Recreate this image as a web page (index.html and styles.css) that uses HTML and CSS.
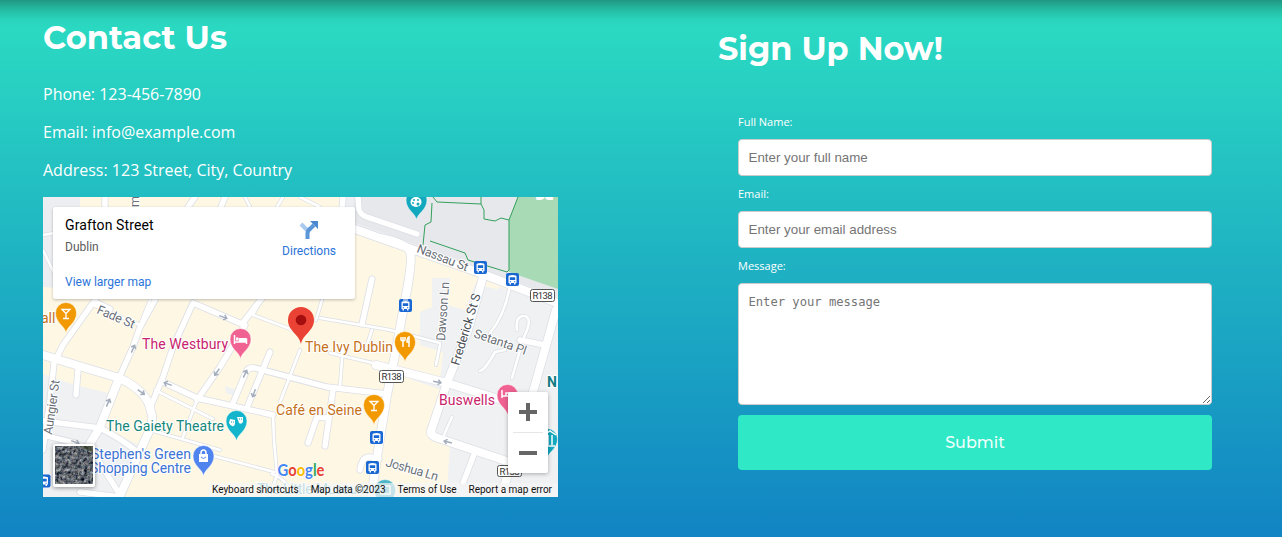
FILE: index.html
```html
<!DOCTYPE html>
<html lang="en">
<head>
<meta charset="utf-8">
<title>Contact Us</title>
<link rel="stylesheet" href="styles.css">
</head>
<body>
<main class="page">
  <section class="contact">
    <h2 class="title"><svg class="title-svg" width="200" height="44"><text x="0" y="31" textLength="184" lengthAdjust="spacingAndGlyphs">Contact Us</text></svg></h2>
    <p>Phone: 123-456-7890</p>
    <p>Email: info@example.com</p>
    <p class="last">Address: 123 Street, City, Country</p>
    <div class="map">
      <svg class="map-canvas" viewBox="43 197 515 300" width="515" height="300">
        <defs>
          <g id="thin">
            <path d="M93 305L140 325M253 315L293 330M320 318L390 330L440 343M330 353L390 367M300 350L280 402M343 345L340 387M210 455L274 472M150 430L220 450M197 400L183 437M273 415L274 440L277 475L270 495M155 390L195 410L213 419M262 298L253 315M322 300L316 320M150 300L140 325M43 235L60 232M43 250L55 275M300 197L320 207M245 197L250 207M283 197L277 207M372 330L366 348"/>
            <path d="M452 417L444 435M440 345L436 365M505 350L495 352Q485 370 480 371M520 350L512 378M510 285Q505 315 490 333M517 330Q515 315 525 316Q533 319 524 337M272 474Q285 478 291 492"/>
          </g>
          <g id="mid">
            <path d="M105 197V207M195 197L188 207M225 197L221 207M343 197L341 225M358 197L359 210Q361 216 370 218L417 234M372 279L362 324M95 300L63 345L54 363L50 400L43 450M95 302L110 309M193 303L173 347L163 377L150 408M193 303L242 324L262 298M155 300L140 327L133 347L119 378M78 370L76 395M43 421L100 428Q120 438 135 450M43 435L75 443M95 455L120 495M163 382L197 398L273 415M245 325L220 367L197 400M233 403L246 372Q248 367 255 368L327 387L387 394M270 352L248 405M333 390L325 446M317 417L308 443M317 417L328 418M475 452L463 483M360 470Q362 456 370 457L379 459M80 492L120 497M545 345L520 340"/>
          </g>
          <g id="wide">
            <path d="M335 222L380 238L480 273L560 304M380 238Q407 243 410 252Q413 260 405 300L396 350L387 395L377 457L371 500M376 365L447 383L505 401M483 277L468 330L447 383L432 428Q429 434 435 437L515 464M556 310L535 385L500 500M43 355L119 378Q148 391 151 412Q155 421 145 440L118 500M119 378L100 427L88 447"/>
          </g>
          <path id="pin" d="M0 19C-1 12-10.500 9-10.500-1A10.500 10.500 0 0 1 10.500-1C10.500 9 1 12 0 19Z"/>
          <g id="bus"><rect x="-6.500" y="-6.500" width="13" height="13" rx="2" fill="#1967d2"/><path d="M-4-3Q-4-4.500 0-4.500T4-3V3.500H3V5H1.500V3.500H-1.500V5H-3V3.500H-4Z" fill="#fff"/><path d="M-2.700-2.300H2.700V.5H-2.700ZM-2.700 1.700h1.200v1h-1.200ZM1.500 1.700h1.200v1H1.500Z" fill="#1967d2"/></g>
          <path id="arrow" d="M-4 0H4M1-2.500L4 0L1 2.500" fill="none" stroke="#a4adbb" stroke-width="1.500"/>
          <g id="glass" fill="none" stroke="#fff" stroke-width="1.300"><path d="M-4-5H4L0-1ZM0-1V4M-3 4H3"/></g>
          <filter id="grain" x="0" y="0" width="100%" height="100%" color-interpolation-filters="sRGB"><feTurbulence type="fractalNoise" baseFrequency=".32" numOctaves="3" seed="4"/><feColorMatrix values="1 .3 0 0 -.28  .9 .4 0 0 -.26  .8 .4 .1 0 -.23  0 0 0 0 1"/></filter>
        </defs>
        <rect x="43" y="197" width="515" height="300" fill="#fef7e4"/>
        <path d="M43 197H80V290L43 287ZM345 197H558V302L380 236L343 224Z" fill="#eceef1"/>
        <path d="M43 374L75 385L108 393L103 427L140 446L122 497H43ZM432 278H450V288H447V305L465 310L475 285L488 287L500 290V305L493 325L503 333L558 340V497H455L447 490L450 445L430 436L442 390L410 379L425 373L440 379L443 352L420 345V312L432 307ZM498 287L558 302V345H492ZM225 386L237 390L234 396L226 393ZM540 300H558V497H520Z" fill="#eff1f3"/>
        <path d="M355 197H558V297L384 233L350 221Z" fill="#e6e8ec"/>
        <path d="M518 197H558V289L509 272V220Z" fill="#a8dab5"/>
        <use href="#thin" class="case thin-case"/><use href="#mid" class="case mid-case"/><use href="#wide" class="case wide-case"/>
        <use href="#thin" class="road thin-road"/><use href="#mid" class="road mid-road"/><use href="#wide" class="road wide-road"/>
        <path d="M433 197L437 202L481 204L484 210V219L495 221L501 218L509 220V270L507 272L468 260L465 253L430 241M481 197V204M518 197L509 220M432 203L431 222L425 225L423 245" fill="none" stroke="#34a05c"/>
        <use href="#arrow" transform="translate(223 317) rotate(20)"/><use href="#arrow" transform="translate(133 349) rotate(-65)"/><use href="#arrow" transform="translate(141 392) rotate(35)"/><use href="#arrow" transform="translate(108 403) rotate(-65)"/><use href="#arrow" transform="translate(168 384) rotate(200)"/><use href="#arrow" transform="translate(217 372) rotate(125)"/><use href="#arrow" transform="translate(245 374) rotate(-65)"/><use href="#arrow" transform="translate(254 393) rotate(110)"/><use href="#arrow" transform="translate(437 382) rotate(12)"/><use href="#arrow" transform="translate(448 442) rotate(195)"/><use href="#arrow" transform="translate(75 442) rotate(20)"/>
        <g class="street">
          <text transform="translate(96 313) rotate(23)" textLength="40">Fade St</text>
          <text transform="translate(416 252) rotate(21)" textLength="54">Nassau St</text>
          <text transform="translate(445 341) rotate(-86)" textLength="59">Dawson Ln</text>
          <text transform="translate(459 366) rotate(-73)" textLength="74" class="dark">Frederick St S</text>
          <text transform="translate(473 337) rotate(19)" textLength="55">Setanta Pl</text>
          <text transform="translate(52 435) rotate(-82)" textLength="55">Aungier St</text>
          <text transform="translate(385 466) rotate(16)" textLength="54">Joshua Ln</text>
          <text transform="translate(139 207) rotate(-90)">m</text>
        </g>
        <g class="poi">
          <text x="41" y="323" fill="#c5711a">all</text>
          <text x="142" y="349" fill="#c8236b" textLength="86">The Westbury</text>
          <text x="305" y="352" fill="#c5711a" textLength="88">The Ivy Dublin</text>
          <text x="276" y="415" fill="#c5711a" textLength="86">Café en Seine</text>
          <text x="439" y="405" fill="#c8236b" textLength="56">Buswells</text>
          <text x="106" y="431" fill="#168779" textLength="118">The Gaiety Theatre</text>
          <text x="91" y="459" fill="#3c73d4" textLength="100">Stephen's Green</text>
          <text x="90" y="473" fill="#3c73d4" textLength="101">Shopping Centre</text>
          <text x="547" y="387" fill="#137b82" class="heavy">N</text>
          <text x="536" y="199" fill="#fff">Du</text>
          <text x="257" y="494" fill="#57abb3" textLength="112">The Little Museum</text>
        </g>
        <g stroke="#fff" stroke-width=".5">
          <use href="#pin" x="66" y="314" fill="#f29900"/><use href="#pin" x="405" y="343" fill="#f29900"/><use href="#pin" x="374" y="406" fill="#f29900"/>
          <use href="#pin" x="240.500" y="340" fill="#f06292"/><use href="#pin" x="507.500" y="396" fill="#f06292"/>
          <use href="#pin" x="236.500" y="422" fill="#12b5cb"/><use href="#pin" x="416.500" y="201" fill="#12a8bd"/><use href="#pin" x="547" y="440" fill="#12a8bd"/><use href="#pin" x="385" y="491" fill="#4eb6c7"/>
          <use href="#pin" x="203.500" y="457" fill="#4f83ee"/>
        </g>
        <use href="#glass" x="66" y="314.500"/><use href="#glass" x="374" y="406.500"/>
        <g fill="none" stroke="#fff" stroke-width="1.500">
          <path d="M401 337v3q2 2 4 0v-3M403 337v10M409 347V337q-2 1-2 5h2"/>
          <path d="M234.500 335v9M234.500 342h12v2M246.500 342v-3h-7v3M381 486h9v8h-9ZM548 435v10M552 435v10M544 435l6-4l6 4M543 446h12M502 390v8M502 396h10v2M512 396v-3h-6v3"/>
          <path d="M201 455v-2q0-3 2.500-3t2.500 3v2"/>
        </g>
        <path d="M236 337.500h2.500v3H236ZM239 338h7v4h-7ZM199 454h9v8h-9ZM230 419l5 1v4q-1 3-3 2t-3-3ZM237 417h6v5q-2 3-4 1l-1-3Z" fill="#fff"/>
        <path d="M201 457q2.500 3 5 0" stroke="#4f83ee" fill="none"/>
        <path d="M231 422h1M233 422h1M239 419h1M241 419h1" stroke="#12a0b0"/>
        <ellipse cx="416" cy="202" rx="5.500" ry="5" fill="#fff"/><g fill="#12a8bd"><circle cx="414" cy="200" r="1"/><circle cx="418" cy="200" r="1"/><circle cx="413" cy="203" r="1"/><circle cx="418" cy="204" r="1.500"/></g>
        <use href="#bus" x="480.500" y="267.500"/><use href="#bus" x="512.500" y="279.500"/><use href="#bus" x="405.500" y="305.500"/><use href="#bus" x="376.500" y="437.500"/><use href="#bus" x="372.500" y="467.500"/><use href="#bus" x="44" y="481"/>
        <path d="M403 300h5" stroke="#fff"/>
        <g class="route">
          <rect x="530.500" y="289.500" width="24" height="12" rx="2"/><text x="532.500" y="299.200" textLength="20">R138</text>
          <rect x="379.500" y="370.500" width="24" height="12" rx="2"/><text x="381.500" y="380.200" textLength="20">R138</text>
          <rect x="497.500" y="465.500" width="24" height="11" rx="2"/><text x="499.500" y="474.700" textLength="20">R138</text>
        </g>
        <path d="M301 344C299 334 288 331 288 320A13 13 0 0 1 314 320C314 331 303 334 301 344Z" fill="#ea4335"/><circle cx="301" cy="320" r="5.300" fill="#a50e0e"/>
        <text class="logo" x="277.500" y="475.500" textLength="47" lengthAdjust="spacingAndGlyphs"><tspan fill="#4285f4">G</tspan><tspan fill="#ea4335">o</tspan><tspan fill="#fbbc04">o</tspan><tspan fill="#4285f4">g</tspan><tspan fill="#34a853">l</tspan><tspan fill="#ea4335">e</tspan></text>
        <g class="thumb"><rect x="53" y="444" width="42" height="43" rx="2" fill="#fff"/><rect x="55" y="446" width="38" height="38" filter="url(#grain)"/><path d="M80 446h13v6l-9-3Z" fill="#3c4a2d" opacity=".6"/></g>
      </svg>
      <div class="card">
        <div class="place"><b>Grafton Street</b><span>Dublin</span><a>View larger map</a></div>
        <div class="directions">
          <svg width="20" height="20" viewBox="0 0 20 20"><path d="M2 4L9 11" stroke="#a9c9ee" stroke-width="4" fill="none"/><path d="M8.500 19V13Q9 10 12 8L15 5" stroke="#5b96d8" stroke-width="4" fill="none"/><path d="M11 1H19V9Z" fill="#4a88d0"/></svg>
          <a>Directions</a>
        </div>
      </div>
      <div class="zoom"><svg width="40" height="81"><path d="M11 20H29M20 11V29M11 61H29" stroke="#666" stroke-width="4"/><path d="M5 40.500H35" stroke="#e6e6e6"/></svg></div>
      <div class="legal"><span>Keyboard shortcuts</span><span>Map data ©2023</span><span>Terms of Use</span><span>Report a map error</span></div>
    </div>
  </section>
  <section class="signup">
    <h2 class="title"><svg class="title-svg" width="240" height="44"><text x="0" y="31" textLength="225" lengthAdjust="spacingAndGlyphs">Sign Up Now!</text></svg></h2>
    <form class="form">
      <label for="name">Full Name:</label>
      <input id="name" type="text" placeholder="Enter your full name">
      <label for="email">Email:</label>
      <input id="email" type="email" placeholder="Enter your email address">
      <label for="message">Message:</label>
      <textarea id="message" placeholder="Enter your message"></textarea>
      <button type="button">Submit</button>
    </form>
  </section>
</main>
</body>
</html>
```
FILE: styles.css
```css
* { box-sizing: border-box; }
body { margin: 0; font-family: "Open Sans", "Noto Sans", sans-serif; color: #fff; }
.page {
  display: flex; height: 537px; overflow: hidden; padding-left: 43px;
  background: linear-gradient(rgba(22,92,78,.55), rgba(22,120,100,.35) 9px, rgba(30,160,140,.1) 20px, transparent 29px), linear-gradient(#2cdec2, #1184c3);
}
.contact { width: 515px; padding-top: 18px; }
.title { margin: 0; height: 44px; }
.title-svg { display: block; overflow: visible; fill: #fff; font: 700 33px Montserrat, Inter, sans-serif; }
.contact p { margin: 0 0 16px; font-size: 16px; line-height: 22px; }
.contact .title { margin-bottom: 21px; }
.contact .last { margin-bottom: 16px; }
.map { position: relative; width: 515px; height: 300px; overflow: hidden; font-family: Roboto, sans-serif; }
.map-canvas { display: block; font-family: Roboto, sans-serif; }
.case, .road { fill: none; stroke-linecap: round; stroke-linejoin: round; }
.case { stroke: #dcdfe5; }
.road { stroke: #fff; }
.thin-case { stroke-width: 4px; }
.thin-road { stroke-width: 2.6px; }
.mid-case { stroke-width: 7px; }
.mid-road { stroke-width: 5.4px; }
.wide-case { stroke-width: 9.5px; }
.wide-road { stroke-width: 8px; }
.street, .poi { paint-order: stroke; stroke: #fff; stroke-width: 2px; stroke-linejoin: round; }
.street { font-size: 12.5px; fill: #6a6f77; }
.street .dark { fill: #4b4f55; }
.poi { font-size: 14px; }
.heavy { font-weight: 700; }
.route rect { fill: #fff; stroke: #555; }
.route text { font-size: 9.5px; fill: #333; }
.logo { font: 700 17px Lato, sans-serif; paint-order: stroke; stroke: #fff; stroke-width: 1px; }
.thumb { filter: drop-shadow(0 1px 2px rgba(0,0,0,.4)); }
.card {
  position: absolute; left: 10px; top: 10px; width: 302px; height: 92px;
  display: flex; justify-content: space-between; padding: 10px 19px 0 12px;
  background: #fff; border-radius: 2px; box-shadow: 0 1px 3px rgba(0,0,0,.25);
  font-size: 12px; line-height: 16px; color: #5b5b5b;
}
.card a { color: #2a73d9; }
.place { display: flex; flex-direction: column; }
.place b { font-weight: 400; font-size: 14px; color: #000; letter-spacing: .12px; }
.place span { margin: 6px 0 19px; }
.directions { display: flex; flex-direction: column; align-items: center; padding-top: 3px; }
.directions a { margin-top: 3px; }
.zoom { position: absolute; right: 10px; top: 195px; width: 40px; height: 81px; background: #fff; border-radius: 2px; box-shadow: 0 1px 4px rgba(0,0,0,.3); }
.zoom svg { display: block; }
.legal {
  position: absolute; right: 0; bottom: 0; width: 349px; height: 14px; padding: 0 6px 0 3px;
  display: flex; justify-content: space-between; background: rgba(245,245,245,.7);
  color: #111; font-size: 10px; line-height: 14px; white-space: nowrap;
}
.signup { margin-left: 160px; width: 494px; padding-top: 29px; }
.form { display: flex; flex-direction: column; padding: 41px 0 0 20px; }
label { font-size: 11px; line-height: 15px; margin-bottom: 10px; }
input, textarea { width: 474px; padding: 10px 9.5px; margin: 0 0 10px; border: 1px solid #ccc; border-radius: 4px; background: #fff; }
input { height: 37px; font: 13.33px "Liberation Sans", Arial, sans-serif; }
textarea { height: 122px; font: 12.15px/16px "DejaVu Sans Mono", monospace; resize: both; }
::placeholder { color: #757575; }
button { height: 55px; border: 0; border-radius: 4px; background: #2ee8c6; color: #effffc; font: 500 16px Montserrat, Inter, sans-serif; }
```
